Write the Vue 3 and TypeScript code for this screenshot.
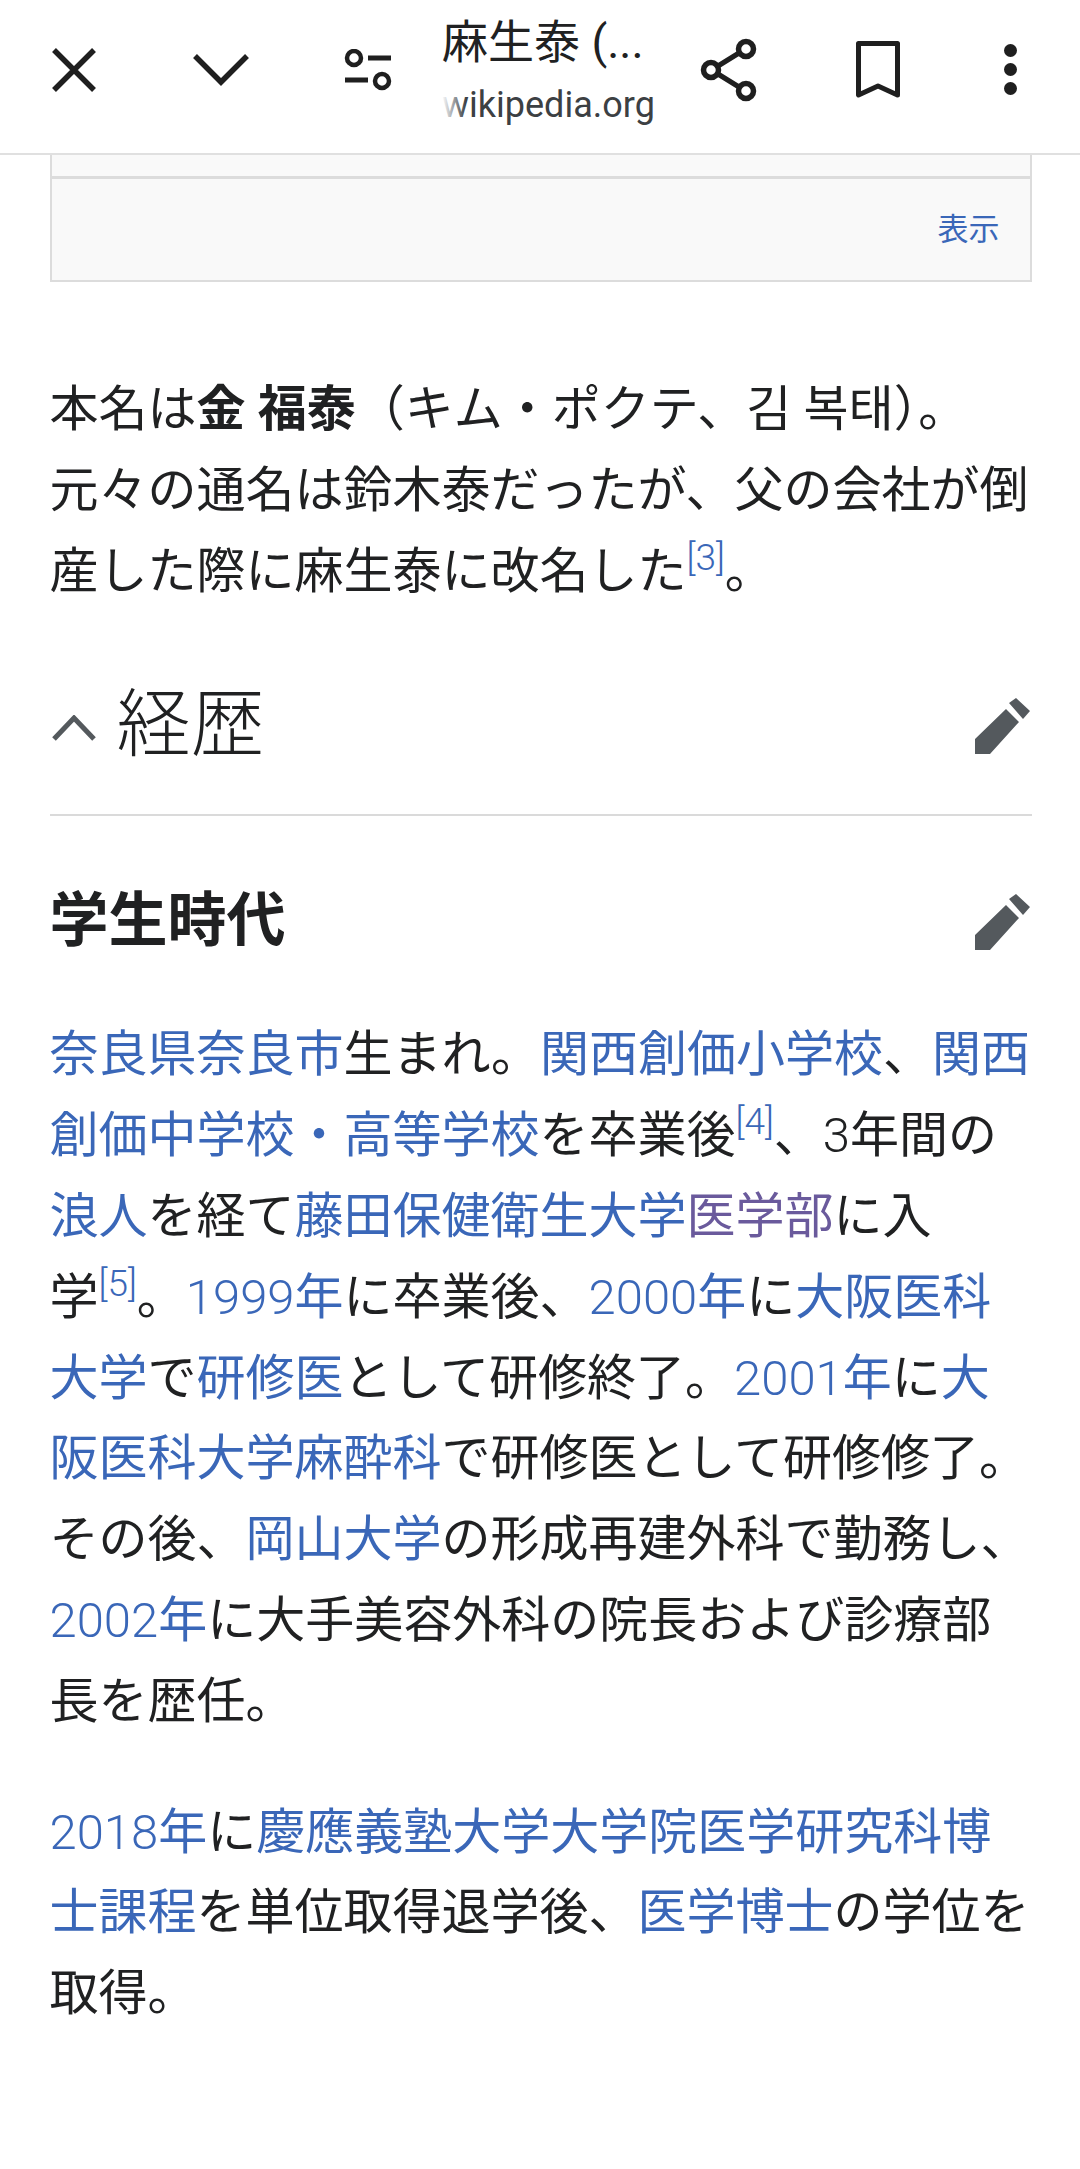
<script setup lang="ts">
// 記事ページの上部バーと本文
</script>

<template>
  <div class="page">
    <header class="bar">
      <button class="icon-btn x-btn" aria-label="閉じる">
        <svg width="44" height="44" viewBox="0 0 44 44"><path d="M2 2 42 42M42 2 2 42" class="ico" stroke-width="5.5" /></svg>
      </button>
      <button class="icon-btn chev-btn" aria-label="最小化">
        <svg width="56" height="36" viewBox="0 0 56 36"><path d="M2 4 28 30 54 4" class="ico" stroke-width="5.5" /></svg>
      </button>
      <button class="icon-btn tune-btn" aria-label="ページ情報">
        <svg width="48" height="42" viewBox="0 0 48 42">
          <circle cx="10" cy="9" r="7" class="ico" stroke-width="4.5" />
          <circle cx="38" cy="32" r="7" class="ico" stroke-width="4.5" />
          <path d="M24 9H47M1 31H24" class="ico" stroke-width="5" />
        </svg>
      </button>
      <div class="title-wrap">
        <div class="title">麻生泰 (...</div>
        <div class="url">wikipedia.org<span class="url-fade"></span></div>
      </div>
      <button class="icon-btn share-btn" aria-label="共有">
        <svg width="58" height="64" viewBox="0 0 58 64">
          <circle cx="46" cy="11" r="7.5" class="ico" stroke-width="5.5" />
          <circle cx="11" cy="32" r="7.5" class="ico" stroke-width="5.5" />
          <circle cx="46" cy="53" r="7.5" class="ico" stroke-width="5.5" />
          <path d="M39 15 18 28M18 36 39 49" class="ico" stroke-width="5" />
        </svg>
      </button>
      <button class="icon-btn mark-btn" aria-label="ブックマーク">
        <svg width="44" height="58" viewBox="0 0 44 58"><path d="M2.5 2.5H41.500V54L22 45 2.500 54Z" class="ico" stroke-width="5" stroke-linejoin="round" /></svg>
      </button>
      <button class="icon-btn more-btn" aria-label="メニュー">
        <span class="dot"></span><span class="dot"></span><span class="dot"></span>
      </button>
    </header>

    <main class="content">
      <div class="infobox">
        <div class="infobox-top"></div>
        <div class="infobox-row"><a class="link show">表示</a></div>
      </div>

      <p class="para intro">
        本名は<b class="cjk-bold">金 福泰</b>（キム・ポクテ、김 복태）。<br />元々の通名は鈴木泰だったが、父の会社が倒<br />産した際に麻生泰に改名した<sup class="ref">[3]</sup>。
      </p>

      <div class="h2">
        <svg class="arrow" width="44" height="26" viewBox="0 0 44 26"><path d="M2 24 22 3 42 24" fill="none" stroke="#54595d" stroke-width="5" /></svg>
        <h2 class="h2-text">経歴</h2>
        <svg class="pencil" width="55" height="56" viewBox="0 0 55 56"><path d="M0 41 31 11 44 24 15 56H0ZM34 5 41 0 55 13 48 21Z" fill="#54595d" /></svg>
      </div>

      <div class="h3">
        <h3 class="h3-text">学生時代</h3>
        <svg class="pencil" width="55" height="56" viewBox="0 0 55 56"><path d="M0 41 31 11 44 24 15 56H0ZM34 5 41 0 55 13 48 21Z" fill="#54595d" /></svg>
      </div>

      <p class="para">
        <a class="link">奈良県奈良市</a>生まれ。<a class="link">関西創価小学校</a>、<a class="link">関西</a><br /><a class="link">創価中学校・高等学校</a>を卒業後<sup class="ref">[4]</sup>、<span class="num">3</span>年間の<br /><a class="link">浪人</a>を経て<a class="link">藤田保健衛生大学</a><a class="link visited">医学部</a>に入<br />学<sup class="ref">[5]</sup>。<a class="link"><span class="num">1999</span>年</a>に卒業後、<a class="link"><span class="num">2000</span>年</a>に<a class="link">大阪医科</a><br /><a class="link">大学</a>で<a class="link">研修医</a>として研修終了。<a class="link"><span class="num">2001</span>年</a>に<a class="link">大</a><br /><a class="link">阪医科大学麻酔科</a>で研修医として研修修了。<br />その後、<a class="link">岡山大学</a>の形成再建外科で勤務し、<br /><a class="link"><span class="num">2002</span>年</a>に大手美容外科の院長および診療部<br />長を歴任。
      </p>

      <p class="para last">
        <a class="link"><span class="num">2018</span>年</a>に<a class="link">慶應義塾大学大学院医学研究科博</a><br /><a class="link">士課程</a>を単位取得退学後、<a class="link">医学博士</a>の学位を<br />取得。
      </p>
    </main>
  </div>
</template>

<style>
html,
body {
  margin: 0;
  background: #fff;
}
</style>

<style scoped>
.page {
  width: 1080px;
  height: 2169px;
  overflow: hidden;
  background: #fff;
  font-family: Roboto, "Noto Sans CJK JP", sans-serif;
  color: #202122;
}

.bar {
  height: 139px;
  padding-bottom: 14px;
  border-bottom: 2px solid #e0e0e0;
  display: flex;
  align-items: center;
}

.icon-btn {
  border: 0;
  padding: 0;
  background: none;
  display: flex;
  align-items: center;
  justify-content: center;
  flex-shrink: 0;
}

.ico {
  fill: none;
  stroke: #1f1f1f;
}

.x-btn {
  margin-left: 52px;
}

.chev-btn {
  margin-left: 96.5px;
}

.tune-btn {
  margin-left: 95.5px;
}

.title-wrap {
  width: 218px;
  margin-left: 50px;
  margin-top: 1px;
}

.title {
  font-size: 46px;
  line-height: 58px;
  white-space: nowrap;
}

.url {
  position: relative;
  margin-top: 11px;
  font-size: 36px;
  line-height: 46px;
  color: #3c4043;
  white-space: nowrap;
}

.url-fade {
  position: absolute;
  left: 0;
  top: 0;
  width: 24px;
  height: 100%;
  background: linear-gradient(to right, #fff, rgba(255, 255, 255, 0));
}

.share-btn {
  margin-left: 40px;
}

.mark-btn {
  margin-left: 98px;
}

.more-btn {
  margin-left: 104px;
  flex-direction: column;
  gap: 6px;
}

.dot {
  width: 13px;
  height: 13px;
  border-radius: 50%;
  background: #1f1f1f;
}

.content {
  padding: 0 48px 0 49.5px;
}

.infobox {
  width: 982px;
  height: 127px;
  border: 2px solid #dcdcdc;
  border-top: 0;
  background: #f9f9f9;
  box-sizing: border-box;
}

.infobox-top {
  height: 21px;
  border-bottom: 3px solid #dcdcdc;
}

.infobox-row {
  display: flex;
  justify-content: flex-end;
  padding: 29px 30px 0 0;
}

.link {
  color: #3a67b8;
}

.link.visited {
  color: #6a5a9c;
}

.show {
  font-size: 31px;
  line-height: 44px;
}

.para {
  margin: 0;
  font-size: 49px;
  line-height: 80.8px;
  white-space: nowrap;
}

.intro {
  margin-top: 88px;
}

.cjk-bold {
  font-weight: 700;
}

.num {
  font-weight: 300;
}

.ref {
  font-size: 37px;
  font-weight: 300;
  line-height: 0;
  color: #3a67b8;
  vertical-align: 18px;
}

.h2 {
  display: flex;
  align-items: center;
  height: 172px;
  margin-top: 30px;
  border-bottom: 2px solid #dadada;
}

.arrow {
  flex-shrink: 0;
  margin: -1px 21px 0 2px;
}

.h2-text {
  margin: -22px 0 0;
  font-family: "Liberation Serif", "Noto Sans CJK JP", serif;
  font-size: 74px;
  font-weight: 300;
  flex: 1;
}

.pencil {
  flex-shrink: 0;
  margin: -5px 2px 0 0;
}

.h3 {
  display: flex;
  align-items: center;
  height: 150px;
  margin-top: 24px;
  margin-bottom: 25px;
}

.h3-text {
  margin: 0;
  font-size: 59px;
  font-weight: 700;
  flex: 1;
}

.h3 .pencil {
  margin-top: 14px;
}

.last {
  margin-top: 50px;
}
</style>
